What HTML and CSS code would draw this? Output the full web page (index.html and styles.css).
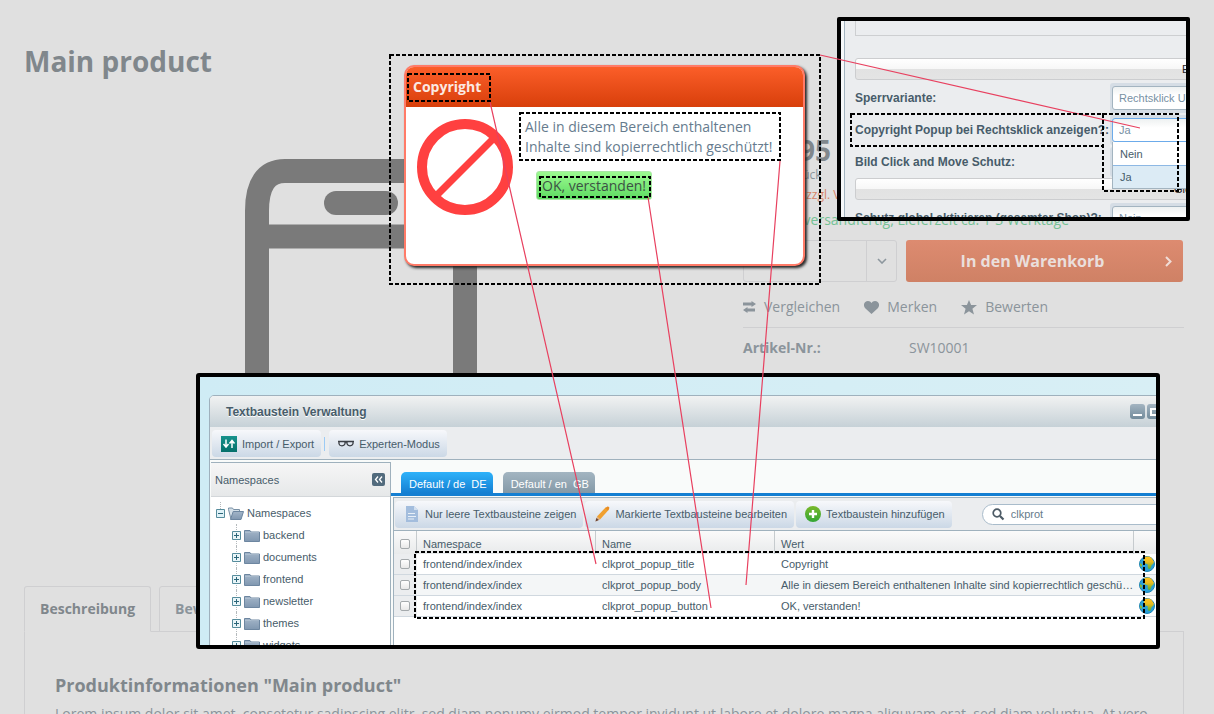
FILE: index.html
```html
<!DOCTYPE html>
<html lang="de">
<head>
<meta charset="utf-8">
<title>Main product</title>
<link rel="stylesheet" href="styles.css">
</head>
<body>
<svg class="defs" width="0" height="0" aria-hidden="true">
  <defs>
    <linearGradient id="folder-fill" x1="0" y1="0" x2="0" y2="1"><stop offset="0" stop-color="#a3b5c8"/><stop offset="1" stop-color="#8097b0"/></linearGradient>
    <linearGradient id="teal" x1="0" y1="0" x2="0" y2="1"><stop offset="0" stop-color="#17928c"/><stop offset="1" stop-color="#04706b"/></linearGradient>
    <linearGradient id="green" x1="0" y1="0" x2="0" y2="1"><stop offset="0" stop-color="#79b82b"/><stop offset="1" stop-color="#33a635"/></linearGradient>
    <linearGradient id="land" x1="0" y1="0" x2="0" y2="1"><stop offset="0" stop-color="#ffc21c"/><stop offset="0.4" stop-color="#eebd20"/><stop offset="1" stop-color="#4fae33"/></linearGradient>
    <symbol id="folder" viewBox="0 0 16 13"><path d="M.5 12V1.500h5.500l1 1.500h8.500V12.500H.5z" fill="url(#folder-fill)" stroke="#6d86a0"/><path d="M1 3.500h14" stroke="#b9c8d6" stroke-width=".6"/></symbol>
    <symbol id="globe" viewBox="0 0 16 16"><circle cx="8" cy="8" r="7.500" fill="#2a9fd8" stroke="#1c84b4"/><path d="M5.300 1.200Q9.500-.3 12.300 1.700L14.800 5.500Q15 8 12.700 9L11.500 12.500 9.700 13.200 8.700 11V8.300L5.500 7.200 4.800 4z" fill="url(#land)"/><path d="M.8 7l2.400 1.500-.8 2.700-1.200-1.500z" fill="#93b92c"/></symbol>
    <symbol id="plus" viewBox="0 0 9 9"><path d="M.5.500h8v8h-8z" fill="#e9f5f8" stroke="#568c9c"/><path d="M2 4.500h5M4.500 2v5" stroke="#2c6679"/></symbol>
    <symbol id="minus" viewBox="0 0 9 9"><path d="M.5.500h8v8h-8z" fill="#dff2f8" stroke="#568c9c"/><path d="M2 4.500h5" stroke="#2c6679"/></symbol>
  </defs>
</svg>
<div class="scene">
  <main class="shop">
    <h1 class="product-title">Main product</h1>
    <div class="product">
      <div class="gallery">
        <svg class="product-image" viewBox="0 0 232 390" role="img" aria-label="Main product">
          <path d="M12 378V52Q12 12 40 12H192Q220 12 220 52V378Z" fill="none" stroke="#7a7a7a" stroke-width="24"/>
          <path d="M12 77.500H220" stroke="#7a7a7a" stroke-width="24"/>
          <path d="M91 44H141" stroke="#7a7a7a" stroke-width="24" stroke-linecap="round"/>
        </svg>
      </div>
      <div class="buybox">
        <div class="price">499,95</div>
        <div class="unit">Inhalt: 1 Stück</div>
        <div class="tax">inkl. MwSt. <a class="tax-link" href="#">zzgl. Versand</a></div>
        <div class="delivery">Sofort versandfertig, Lieferzeit ca. 1-3 Werktage</div>
        <div class="order">
          <div class="quantity">
            <select class="quantity-select" aria-label="Menge"><option>1</option></select>
            <svg class="quantity-arrow" viewBox="0 0 10 6"><path d="M1 1l4 4 4-4" fill="none" stroke="#8d979e" stroke-width="1.600"/></svg>
          </div>
          <button class="cart" type="button"><span>In den Warenkorb</span>
            <svg class="cart-arrow" viewBox="0 0 7 11"><path d="M1 1l4.500 4.500L1 10" fill="none" stroke="#f0ddd7" stroke-width="2"/></svg>
          </button>
        </div>
        <div class="actions">
          <button class="action" type="button"><svg width="13" height="12" viewBox="0 0 13 12"><path d="M0 3h9.500M3.500 9H12" stroke="#8b949b" stroke-width="3"/><path d="M8.500 0L13 3 8.500 6zM4.500 6L0 9l4.500 3z" fill="#8b949b"/></svg>Vergleichen</button>
          <button class="action" type="button"><svg width="15" height="13" viewBox="0 0 15 13"><path d="M7.500 13L1.200 7.200C-1.500 4 .5 0 4 0c1.600 0 2.800.8 3.500 2C8.200.8 9.400 0 11 0c3.500 0 5.500 4 2.800 7.200z" fill="#8b949b"/></svg>Merken</button>
          <button class="action" type="button"><svg width="16" height="15" viewBox="0 0 16 15"><path d="M8 0l2.100 5H16l-4.600 3.700L13 14.500 8 11.300 3 14.500l1.600-5.800L0 5h5.900z" fill="#8b949b"/></svg>Bewerten</button>
        </div>
        <dl class="meta"><dt>Artikel-Nr.:</dt><dd>SW10001</dd></dl>
      </div>
    </div>
    <nav class="tabs">
      <a class="tab tab-active" href="#">Beschreibung</a>
      <a class="tab" href="#">Bewertungen</a>
    </nav>
    <section class="description">
      <h2 class="description-title">Produktinformationen "Main product"</h2>
      <p class="description-text">Lorem ipsum dolor sit amet, consetetur sadipscing elitr, sed diam nonumy eirmod tempor invidunt ut labore et dolore magna aliquyam erat, sed diam voluptua. At vero</p>
    </section>
  </main>

  <section class="popup" role="dialog" aria-label="Copyright">
    <h2 class="popup-title">Copyright</h2>
    <div class="popup-body">
      <svg class="popup-icon" viewBox="0 0 96 96"><circle cx="48" cy="48" r="43" fill="none" stroke="#ff4040" stroke-width="10"/><path d="M18 78L78 18" stroke="#ff4040" stroke-width="7"/></svg>
      <div class="popup-content">
        <p class="popup-text">Alle in diesem Bereich enthaltenen<br>Inhalte sind kopierrechtlich geschützt!</p>
        <button class="popup-button" type="button">OK, verstanden!</button>
      </div>
    </div>
  </section>

  <section class="settings">
    <div class="settings-form">
      <div class="fieldset-end"></div>
      <div class="bar">Einstellungen</div>
      <div class="field"><label for="variant">Sperrvariante:</label><span class="combo"><select id="variant"><option>Rechtsklick UND</option></select></span></div>
      <div class="field"><label for="show">Copyright Popup bei Rechtsklick anzeigen?:</label><span class="combo combo-open"><select id="show"><option>Ja</option></select></span></div>
      <div class="field"><label for="move">Bild Click and Move Schutz:</label><span class="combo"><select id="move"><option>Ja</option></select></span></div>
      <div class="bar bar-global">Global</div>
      <div class="field"><label for="global">Schutz global aktivieren (gesamter Shop)?:</label><span class="combo"><select id="global"><option>Nein</option></select></span></div>
    </div>
    <ul class="options"><li>Nein</li><li class="option-active">Ja</li></ul>
  </section>

  <section class="backend">
    <div class="window">
      <header class="window-title"><h2>Textbaustein Verwaltung</h2>
        <div class="window-tools">
          <button type="button" aria-label="Minimieren"><svg viewBox="0 0 15 15"><path d="M3 11h9" stroke="#fff" stroke-width="2"/></svg></button>
          <button type="button" aria-label="Maximieren"><svg viewBox="0 0 15 15"><path d="M4 5h9v6H4z" fill="none" stroke="#fff" stroke-width="2"/></svg></button>
        </div>
      </header>
      <div class="toolbar">
        <button class="tool" type="button"><svg width="16" height="16" viewBox="0 0 16 16"><path d="M0 0h16v16H0z" fill="url(#teal)"/><path d="M5 3.500v7M2.500 8L5 11l2.500-3M11 12V5M8.500 7.500L11 4.500l2.500 3" fill="none" stroke="#fff" stroke-width="1.500"/></svg>Import / Export</button>
        <span class="separator"></span>
        <button class="tool" type="button"><svg width="16" height="16" viewBox="0 0 16 16"><path d="M0 5.500h16M7 6.500q1-1 2 0M1 5.500v2.300q.5 2 3 2 2.300 0 3-2V5.500M9 5.500v2.300q.7 2 3 2t3-2V5.500" fill="none" stroke="#3b3f45" stroke-width="1.300"/></svg>Experten-Modus</button>
      </div>
      <div class="columns">
        <aside class="sidebar">
          <header class="sidebar-title">Namespaces<button type="button" aria-label="Einklappen"><svg viewBox="0 0 13 13"><path d="M6 3.500l-2.500 3L6 9.500M10 3.500l-2.500 3 2.500 3" fill="none" stroke="#fff" stroke-width="1.300"/></svg></button></header>
          <ul class="tree">
            <li class="root"><svg class="knob"><use href="#minus"/></svg><svg class="folder" viewBox="0 0 16 13"><path d="M.5 2.500V1h4l1 1.500h6v2L3 12z" fill="#d5e0e8" stroke="#7890a5"/><path d="M2.500 12.500L5.200 4.500H15.500L13 12.500z" fill="url(#folder-fill)" stroke="#6d86a0"/></svg>Namespaces</li>
            <li><svg class="knob"><use href="#plus"/></svg><svg class="folder"><use href="#folder"/></svg>backend</li>
            <li><svg class="knob"><use href="#plus"/></svg><svg class="folder"><use href="#folder"/></svg>documents</li>
            <li><svg class="knob"><use href="#plus"/></svg><svg class="folder"><use href="#folder"/></svg>frontend</li>
            <li><svg class="knob"><use href="#plus"/></svg><svg class="folder"><use href="#folder"/></svg>newsletter</li>
            <li><svg class="knob"><use href="#plus"/></svg><svg class="folder"><use href="#folder"/></svg>themes</li>
            <li><svg class="knob"><use href="#plus"/></svg><svg class="folder"><use href="#folder"/></svg>widgets</li>
          </ul>
        </aside>
        <div class="content">
          <nav class="locales"><button class="locale locale-active" type="button">Default / de&nbsp; DE</button><button class="locale" type="button">Default / en&nbsp; GB</button></nav>
          <div class="grid-tools">
            <button class="tool" type="button"><svg width="16" height="16" viewBox="0 0 16 16"><path d="M2 0h8l4 4v12H2z" fill="#a3bddd"/><path d="M10 0v4h4z" fill="#d3e0ef"/><path d="M4 7.500h7M4 10.500h8M4 13h6" stroke="#e8f0f8"/></svg>Nur leere Textbausteine zeigen</button>
            <button class="tool" type="button"><svg width="16" height="16" viewBox="0 0 16 16"><path d="M3 10.500L12 1l3 2.500L6 13.500z" fill="#f0a030"/><path d="M11.500 2.500L13 .8q1-.8 2 .3.800 1-.2 2L14 4.500z" fill="#e98c22"/><path d="M3 10.500l3 3-4.500 2z" fill="#d9ac80"/><path d="M2.300 12l2.500 2-3.300 1.600z" fill="#6a4436"/></svg>Markierte Textbausteine bearbeiten</button>
            <button class="tool" type="button"><svg width="16" height="16" viewBox="0 0 16 16"><circle cx="8" cy="8" r="8" fill="url(#green)"/><path d="M4 8h8M8 4v8" stroke="#fff" stroke-width="2.400"/></svg>Textbaustein hinzufügen</button>
            <label class="search"><svg width="13" height="13" viewBox="0 0 13 13"><circle cx="5" cy="5" r="3.800" fill="none" stroke="#4d5b66" stroke-width="1.700"/><path d="M8 8l3.500 3.500" stroke="#4d5b66" stroke-width="2.200"/></svg><input type="text" value="clkprot" aria-label="Suche"></label>
          </div>
          <div class="grid-area">
            <table class="grid">
              <colgroup><col class="col-check"><col class="col-key"><col class="col-key"><col><col class="col-globe"></colgroup>
              <thead><tr><th><input type="checkbox" aria-label="Alle"></th><th>Namespace</th><th>Name</th><th>Wert</th><th></th></tr></thead>
              <tbody>
                <tr><td><input type="checkbox" aria-label="clkprot_popup_title"></td><td>frontend/index/index</td><td>clkprot_popup_title</td><td>Copyright</td><td><svg class="globe"><use href="#globe"/></svg></td></tr>
                <tr><td><input type="checkbox" aria-label="clkprot_popup_body"></td><td>frontend/index/index</td><td>clkprot_popup_body</td><td>Alle in diesem Bereich enthaltenen Inhalte sind kopierrechtlich geschü…</td><td><svg class="globe"><use href="#globe"/></svg></td></tr>
                <tr><td><input type="checkbox" aria-label="clkprot_popup_button"></td><td>frontend/index/index</td><td>clkprot_popup_button</td><td>OK, verstanden!</td><td><svg class="globe"><use href="#globe"/></svg></td></tr>
              </tbody>
            </table>
          </div>
        </div>
      </div>
    </div>
  </section>

  <svg class="notes" width="1214" height="714" viewBox="0 0 1214 714" aria-hidden="true">
    <g fill="none" stroke="#e8405f" stroke-width="1.200">
      <path d="M820 55L1140 128M490 102L596 564M648 197L711 608M780 161L746 585"/>
    </g>
    <g fill="none" stroke="#000" stroke-width="2" stroke-dasharray="4 2">
      <rect x="390" y="55" width="430" height="229"/>
      <rect x="408" y="74" width="82" height="27"/>
      <rect x="520" y="113" width="260" height="47"/>
      <rect x="540" y="177" width="110" height="20"/>
      <rect x="851" y="114" width="252" height="32"/>
      <rect x="1103" y="114" width="75" height="77"/>
      <rect x="415" y="552" width="729" height="66"/>
    </g>
  </svg>
</div>
</body>
</html>
```
FILE: styles.css
```css
* { box-sizing: border-box; }
body { margin: 0; background: #e0e0e0; color: #8b949b; font: 14px/20px "Open Sans", sans-serif; }
h1, h2, p, ul, dl, dd { margin: 0; padding: 0; }
ul { list-style: none; }
button, input, select { font: inherit; color: inherit; margin: 0; padding: 0; border: 0; background: none; }
select { appearance: none; }
a { color: inherit; text-decoration: none; }
.defs { position: absolute; }

.scene { position: relative; height: 100vh; overflow: hidden; }
.notes { position: absolute; left: 0; top: 0; pointer-events: none; }

/* Shop page */
.shop { isolation: isolate; padding: 41px 30px 0 24px; }
.product-title { font-size: 28px; line-height: 40px; color: #80878c; }
.product { display: grid; grid-template-columns: 1fr 441px; min-height: 505px; padding-top: 52px; }
.gallery { display: flex; justify-content: center; padding: 26px 46px 0 0; }
.product-image { width: 232px; height: 390px; }
.price { font-size: 28px; line-height: 34px; font-weight: bold; color: #80878c; }
.unit, .tax { font-size: 12px; line-height: 20px; }
.unit { margin-top: -2px; }
.tax-link { color: #d78468; }
.delivery { line-height: 24px; margin-top: 3px; padding-left: 17px; color: #75c295; }
.order { display: flex; gap: 9px; margin-top: 8px; }
.quantity { position: relative; flex: 0 0 154px; height: 42px; border: 1px solid #cfcfd1; border-radius: 3px; }
.quantity-select { width: 100%; height: 100%; padding-left: 14px; }
.quantity-arrow { position: absolute; right: 9px; top: 17px; width: 10px; height: 6px; }
.quantity::after { content: ""; position: absolute; right: 29px; top: 0; bottom: 0; border-left: 1px solid #cfcfd1; }
.cart { position: relative; flex: 1; height: 42px; padding-right: 24px; margin-right: 1px; border-radius: 3px; background: linear-gradient(#dd8b70, #cf8165); color: #eadfdc; font-size: 16px; font-weight: bold; }
.cart-arrow { position: absolute; right: 11px; top: 16px; width: 7px; height: 11px; }
.actions { display: flex; gap: 24px; padding: 15px 0 10px; border-bottom: 1px solid #cfcfd1; }
.action { display: flex; align-items: center; gap: 8px; }
.meta { display: grid; grid-template-columns: 166px 1fr; margin-top: 10px; }
.meta dt { font-weight: bold; }
.tabs { display: flex; gap: 8px; margin-bottom: -1px; }
.tab { z-index: 1; height: 46px; padding: 12px 15px; border: 1px solid #cfcfd1; border-radius: 3px 3px 0 0; font-weight: bold; }
.tab-active { color: #80878c; background: #e0e0e0; border-bottom-color: #e0e0e0; }
.description { min-height: 200px; padding: 40px 30px; border: 1px solid #cfcfd1; }
.description-title { font-size: 18px; line-height: 26px; color: #80878c; }
.description-text { margin-top: 6px; white-space: nowrap; }

/* Copyright popup */
.popup { position: absolute; left: 404px; top: 65px; width: 401px; height: 201px; border: 2px solid #ff7b68; border-radius: 10px; background: #fff; box-shadow: 2px 2px 3px #222; overflow: hidden; }
.popup-title { padding: 10px 7px; background: linear-gradient(#fb5e29, #d83f0b); color: #fbe9e4; font-size: 14px; line-height: 20px; }
.popup-body { display: flex; gap: 12px; padding: 10px 11px; }
.popup-icon { width: 96px; height: 96px; margin-top: 2px; flex: none; }
.popup-text { color: #667b8e; white-space: nowrap; }
.popup-button { height: 29px; margin: 14px 0 0 11px; padding: 0 5px; border: 1px solid #a9e6a4; border-radius: 3px; background: linear-gradient(#9cfa90, #5edb62); color: #3d5245; }

/* Plugin settings excerpt */
.settings { position: absolute; left: 837px; top: 17px; width: 353px; height: 204px; border: 4px solid #000; border-radius: 2px; background: #f6f8f9; overflow: hidden; color: #475c6a; font: 11px/16px "Liberation Sans", Arial, sans-serif; }
.settings-form { width: 420px; margin-left: 3px; padding: 0 0 0 10px; border-left: 1px solid #a3b4c0; background: #ebedef; }
.fieldset-end { height: 15px; border: 1px solid #cdcfd1; border-top: 0; margin-bottom: 22px; }
.bar { height: 22px; padding-left: 326px; border: 1px solid #cccdcf; border-radius: 3px; background: linear-gradient(#fff, #f7f7f7 50%, #e2e2e2 50%, #e4e4e4); line-height: 20px; color: #222; }
.bar-global { padding-left: 318px; }
.field { display: grid; grid-template-columns: 255px 1fr; align-items: center; height: 32px; }
.bar + .field { margin-top: 2px; }
.field label { font-weight: bold; font-size: 12px; white-space: nowrap; }
.combo { display: block; height: 30px; padding: 3px 2px; background: #d5dde5; border-radius: 3px; }
.combo select { display: block; width: 100%; height: 24px; padding: 0 6px; border: 1px solid #a3b4c0; border-radius: 3px; background: linear-gradient(#eef1f1, #fff 40%); color: #7790a3; }
.combo-open select { border-color: #6cabea; }
.options { position: absolute; left: 271px; top: 121px; width: 140px; border: 1px solid #a3b4c0; border-top: 0; background: #fff; }
.options li { padding: 4px 7px 3px; line-height: 16px; color: #475c6a; }
.options .option-active { padding-top: 3px; border-top: 1px solid #8db8e4; background: #dcebf5; }

/* Backend window */
.backend { position: absolute; left: 196px; top: 373px; width: 964px; height: 276px; border: 4px solid #000; border-radius: 3px; background: linear-gradient(90deg, #cfecf5, #d8eff5); overflow: hidden; color: #475c6a; font: 11px/14px "Liberation Sans", Arial, sans-serif; }
.window { width: 980px; margin: 18px 0 0 9px; border: 1px solid #9fb1bd; border-radius: 5px 0 0; background: #ebedef; overflow: hidden; }
.window-title { display: flex; align-items: center; height: 31px; padding-left: 16px; background: linear-gradient(#f1f2f2, #c6d1d7); }
.window-title h2 { flex: 1; font-size: 12px; text-shadow: 0 1px #fff; }
.window-tools { display: flex; gap: 2px; width: 58px; }
.window-tools button { width: 15px; height: 15px; border-radius: 3px; background: linear-gradient(#a3b4c1, #728b9b); }
.window-tools svg, .sidebar-title svg { display: block; }
.toolbar { display: flex; align-items: center; height: 33px; padding: 1px 0 0 2px; border-bottom: 1px solid #9fb1bd; }
.tool { display: flex; flex: none; align-items: center; gap: 5px; height: 27px; padding: 0 7px 0 9px; border-radius: 4px; background: linear-gradient(#f7f8fb, #cbd8e6); }
.separator { height: 14px; margin: 0 4px 0 3px; border-left: 1px solid #9ccbf5; }
.columns { display: flex; padding-left: 1px; background: #f9fbfa; }
.sidebar { flex: 0 0 180px; margin-top: 2px; border-top: 1px solid #9fb1bd; border-right: 1px solid #9fb1bd; background: #fff; }
.sidebar-title { display: flex; align-items: center; justify-content: space-between; height: 34px; padding: 0 5px 0 4px; border-bottom: 1px solid #d3d7da; background: linear-gradient(#f6f6f6, #e6e8e9); }
.sidebar-title button { width: 13px; height: 13px; border-radius: 2px; background: #526b7d; }
.tree { padding: 5px 0 0 5px; }
.tree li { position: relative; display: flex; align-items: center; height: 22px; padding-left: 16px; }
.tree .root { padding-left: 0; }
.tree li::before { content: ""; position: absolute; left: 20px; top: 0; height: 22px; border-left: 1px dotted #b5babd; }
.tree .root::before { left: 4px; top: 0; height: 11px; }
.knob { position: relative; width: 9px; height: 9px; margin-right: 3px; }
.folder { width: 16px; height: 13px; margin-right: 3px; }
.content { display: flex; flex-direction: column; flex: 1; min-width: 0; }
.locales { display: flex; flex: none; align-items: flex-end; gap: 10px; height: 36px; padding-left: 10px; border-bottom: 3px solid #147fd2; }
.locale { height: 21px; padding: 3px 6px 0 8px; border-radius: 5px 5px 0 0; background: linear-gradient(#a3b5c1, #8499a7); color: #fff; white-space: pre; }
.locale-active { background: linear-gradient(#2eb2fa, #147fd2); }
.grid-tools { display: flex; flex: none; align-items: center; gap: 2px; height: 34px; margin: 1px 0 0 2px; padding-left: 1px; border: 1px solid #9fb1bd; border-right: 0; background: #ebedef; }
.search { display: flex; align-items: center; flex: 0 0 220px; gap: 6px; height: 21px; margin-left: 28px; padding-left: 9px; border: 1px solid #a9bccb; border-radius: 11px; background: #fff; color: #667b8a; }
.search input { width: 120px; height: 18px; }
.grid-area { flex: 1; margin-left: 2px; border-left: 1px solid #9fb1bd; background: #fff; }
.grid { width: 100%; border-collapse: separate; border-spacing: 0; table-layout: fixed; }
.col-check { width: 23px; }
.col-key { width: 179px; }
.col-globe { width: 54px; }
.grid th { height: 23px; padding: 3px 6px 0; text-align: left; font-weight: normal; background: linear-gradient(#fafafa, #e8eaeb); border-right: 1px solid #c6cbce; }
.grid td { height: 21px; padding: 0 6px; white-space: nowrap; overflow: hidden; border-bottom: 1px solid #d0d8df; }
.grid tbody tr:nth-child(2) td { background: #f4f6f7; }
.grid tbody tr:nth-child(n) td:first-child { background: #ebedef; }
.grid td:last-child { padding: 0 5px; }
.grid input { appearance: none; display: block; width: 10px; height: 10px; border: 1px solid #a4a9ac; border-radius: 2px; background: linear-gradient(#fff, #e8e8e8); }
.globe { display: block; width: 16px; height: 16px; }
```
